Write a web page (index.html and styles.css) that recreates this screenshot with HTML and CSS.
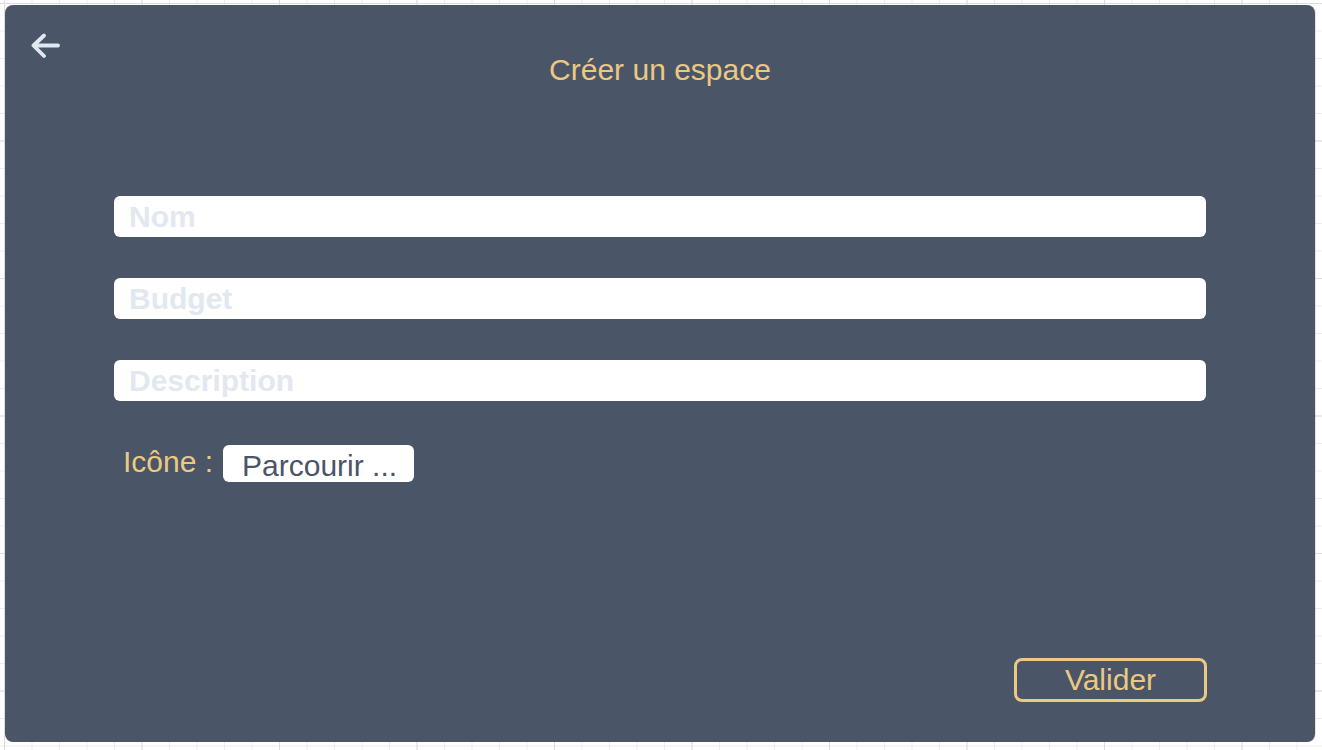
FILE: index.html
```html
<!DOCTYPE html>
<html lang="fr">
<head>
    <meta charset="UTF-8">
    <meta name="viewport" content="width=device-width, initial-scale=1.0">
    <title>Créer un espace</title>
    <link rel="stylesheet" href="styles.css">
</head>
<body>
    <div class="card">
        <div class="header">
            <a class="back" href="#" aria-label="Retour">
                <svg width="30" height="26" viewBox="0 0 30 26">
                    <path d="M27 12.5 H3 M13 2.5 L2.5 12.5 L13 23" fill="none" stroke="#e2e8f0" stroke-width="3.8" stroke-linecap="round" stroke-linejoin="round"/>
                </svg>
            </a>
            <h2>Créer un espace</h2>
        </div>

        <form class="space-form">
            <input type="text" name="nom" placeholder="Nom">
            <input type="text" name="budget" placeholder="Budget">
            <input type="text" name="description" placeholder="Description">

            <div class="icon-row">
                <label for="icone">Icône :</label>
                <button type="button" class="browse" id="icone">Parcourir ...</button>
            </div>
        </form>

        <div class="footer">
            <button type="submit" class="submit">Valider</button>
        </div>
    </div>
</body>
</html>
```

FILE: styles.css
```css
html, body {
    height: 100%;
}
body {
    margin: 0;
    padding: 5px 7px 8px 5px;
    box-sizing: border-box;
    font-family: "Liberation Sans", Arial, sans-serif;
    background-color: #fff;
    background-image:
        linear-gradient(#dcdcdc 1px, transparent 1px),
        linear-gradient(90deg, #dcdcdc 1px, transparent 1px),
        linear-gradient(#ececec 1px, transparent 1px),
        linear-gradient(90deg, #ececec 1px, transparent 1px);
    background-size: 137.5px 137.5px, 137.5px 137.5px, 27.5px 27.5px, 27.5px 27.5px;
    background-position: 4px 3px;
}
.card {
    height: 100%;
    background: #4a5568;
    border-radius: 8px;
    box-shadow: 1px 0 0 rgba(0, 0, 0, 0.1);
    display: flex;
    flex-direction: column;
    padding-top: 28px;
    box-sizing: border-box;
}
.header {
    display: grid;
    grid-template-columns: 1fr auto 1fr;
    align-items: start;
}
.back {
    padding-left: 26px;
    display: block;
    width: 30px;
    height: 26px;
}
.back svg {
    display: block;
}
h2 {
    margin: 19px 0 0;
    font-size: 30px;
    font-weight: normal;
    line-height: 36px;
    color: #ebc982;
}
.space-form {
    flex: 1;
    display: flex;
    flex-direction: column;
    gap: 41px;
    padding: 0 109px;
    margin-top: 108px;
}
.space-form input {
    height: 41px;
    border: none;
    border-radius: 6px;
    padding: 0 15px;
    background: #fff;
    font-family: inherit;
    font-size: 30px;
    font-weight: bold;
    color: #4a5568;
    outline: none;
}
.space-form input::placeholder {
    color: #e2e8f0;
}
.icon-row {
    display: flex;
    align-items: flex-start;
    gap: 10px;
    margin-top: 3px;
    padding-left: 9px;
}
.icon-row label {
    font-size: 30px;
    line-height: 34px;
    color: #ebc982;
}
.browse {
    background: #fff;
    border: none;
    border-radius: 6px;
    padding: 4px 17px 0 19px;
    line-height: 33px;
    font-family: inherit;
    font-size: 30px;
    color: #4a5568;
    cursor: pointer;
}
.footer {
    display: flex;
    justify-content: flex-end;
    padding: 0 108px 40px;
}
.submit {
    width: 193px;
    height: 44px;
    background: transparent;
    border: 3px solid #ebc982;
    border-radius: 8px;
    font-family: inherit;
    font-size: 30px;
    line-height: 38px;
    padding: 0;
    color: #ebc982;
    cursor: pointer;
}
```
